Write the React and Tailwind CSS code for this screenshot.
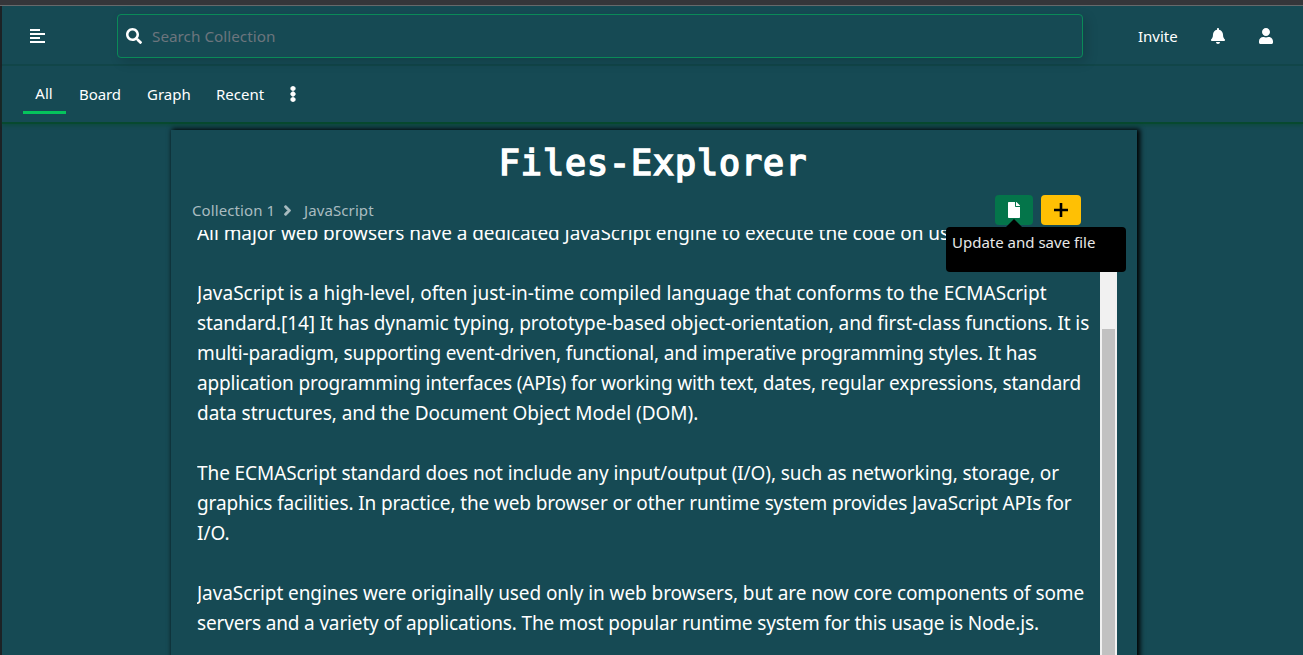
import { FaSearch, FaBell, FaEllipsisV, FaFile, FaUser, FaChevronRight } from "react-icons/fa";

const LINES = [
  ["All major web browsers have a dedicated JavaScript engine to execute the code on us", "tracking-[-0.06px]"],
  ["", ""],
  ["JavaScript is a high-level, often just-in-time compiled language that conforms to the ECMAScript", "tracking-[0px]"],
  ["standard.[14] It has dynamic typing, prototype-based object-orientation, and first-class functions. It is", "tracking-[-0.1px]"],
  ["multi-paradigm, supporting event-driven, functional, and imperative programming styles. It has", "tracking-[-0.14px]"],
  ["application programming interfaces (APIs) for working with text, dates, regular expressions, standard", "tracking-[-0.18px]"],
  ["data structures, and the Document Object Model (DOM).", "tracking-[-0.04px]"],
  ["", ""],
  ["The ECMAScript standard does not include any input/output (I/O), such as networking, storage, or", "tracking-[-0.085px]"],
  ["graphics facilities. In practice, the web browser or other runtime system provides JavaScript APIs for", "tracking-[-0.13px]"],
  ["I/O.", ""],
  ["", ""],
  ["JavaScript engines were originally used only in web browsers, but are now core components of some", "tracking-[-0.08px]"],
  ["servers and a variety of applications. The most popular runtime system for this usage is Node.js.", "tracking-[-0.155px]"],
];

function TopBar() {
  return (
    <header className="flex h-[60px] items-center border-b-2 border-[#12464a] pt-0.5">
      <svg viewBox="0 0 15 14" className="ml-[28px] h-[14px] w-[15px] fill-white" shapeRendering="crispEdges">
        <path d="M0 0h10v2H0zM0 4h15v2H0zM0 8h10v2H0zM0 12h15v2H0z" />
      </svg>
      <div className="ml-[72px] flex h-11 w-[966px] items-center rounded border border-[#0a8a58] pl-2 shadow-[4px_4px_12px_rgba(0,0,0,0.15)]">
        <FaSearch className="h-4 w-4" />
        <span className="ml-[10px] pt-px text-[15.3px] text-[#6c757d]">Search Collection</span>
      </div>
      <span className="ml-[55px] w-[40px] text-[15px]">Invite</span>
      <FaBell className="ml-[32px] h-4 w-4" />
      <FaUser className="ml-8 h-4 w-4" />
    </header>
  );
}

function Tabs() {
  return (
    <nav className="flex h-[58px] items-start border-b-2 border-[#07492f] pl-[20.5px] text-[15px] shadow-[0_2px_3px_rgba(7,73,47,0.5)]">
      <span className="mt-[8px] h-[40px] w-[43px] border-b-3 border-[#05c45c] text-center leading-[38px]">All</span>
      <span className="ml-[13.5px] w-[68px] leading-[56px] tracking-[-0.1px]">Board</span>
      <span className="w-[69px] leading-[56px]">Graph</span>
      <span className="w-[68.5px] leading-[56px]">Recent</span>
      <FaEllipsisV className="mt-5 h-4 w-4 stroke-white stroke-[24]" />
    </nav>
  );
}

function Tooltip() {
  return (
    <div className="absolute top-8 -left-[49px] z-10 h-[45px] w-[180px] rounded bg-black px-[6px] text-[15px] leading-[30px] text-[#e8e8e8]">
      <svg viewBox="0 0 16 8" className="absolute -top-2 left-[60px] h-2 w-4">
        <path d="M0 8 8 0l8 8z" />
      </svg>
      Update and save file
    </div>
  );
}

export default function App() {
  return (
    <div className="h-[655px] w-[1303px] overflow-hidden bg-[#164a54] font-['Noto_Sans',sans-serif] whitespace-nowrap text-white">
      <div className="h-[6px] border-b border-[#66696b] bg-[#35363a]" />
      <div className="h-[649px] border-l-2 border-[#1c2225]">
        <TopBar />
        <Tabs />
        <main className="mt-[6px] ml-[169px] flex h-[540px] w-[966px] flex-col shadow-[2px_0_5px_1px_#000]">
          <h1 className="h-[65px] pr-0.5 text-center font-['DejaVu_Sans_Mono',monospace] text-[35px] leading-[66px] tracking-[0.95px] [-webkit-text-stroke:1.7px_white]">Files-Explorer</h1>
          <div className="flex h-[35px] items-start pl-[21px]">
            <div className="flex h-[30px] w-[803px] items-center text-[15px] text-[#a9bcc0]">
              <span className="w-[90px] tracking-[0.1px]">Collection 1</span>
              <FaChevronRight className="mr-[11px] h-[11px] w-[11px] stroke-current stroke-[50]" />
              <span className="tracking-[0.1px]">JavaScript</span>
            </div>
            <div className="relative">
              <div className="flex h-[30px] w-[38px] items-center justify-center rounded bg-[#04754a]">
                <FaFile className="h-4 w-4" />
              </div>
              <Tooltip />
            </div>
            <div className="ml-2 flex h-[30px] w-10 items-center justify-center rounded bg-[#ffc004] text-black">
              <svg viewBox="0 0 14 14" className="h-[14px] w-[14px] stroke-black stroke-[2.6]">
                <path d="M7 0v14M0 7h14" />
              </svg>
            </div>
          </div>
          <div className="flex h-[440px] pl-[26px]">
            <div className="flex w-[903px] flex-col overflow-hidden text-[19px]">
              <div className="-mt-[12px]">
                {LINES.map(([text, tracking], i) => (
                  <p key={i} className={"h-[30px] leading-[30px] " + tracking}>{text}</p>
                ))}
              </div>
            </div>
            <div className="w-[17px] bg-[#f1f1f1] px-[2px] pt-[99px]">
              <div className="h-full bg-[#c1c1c1]" />
            </div>
          </div>
        </main>
      </div>
    </div>
  );
}
